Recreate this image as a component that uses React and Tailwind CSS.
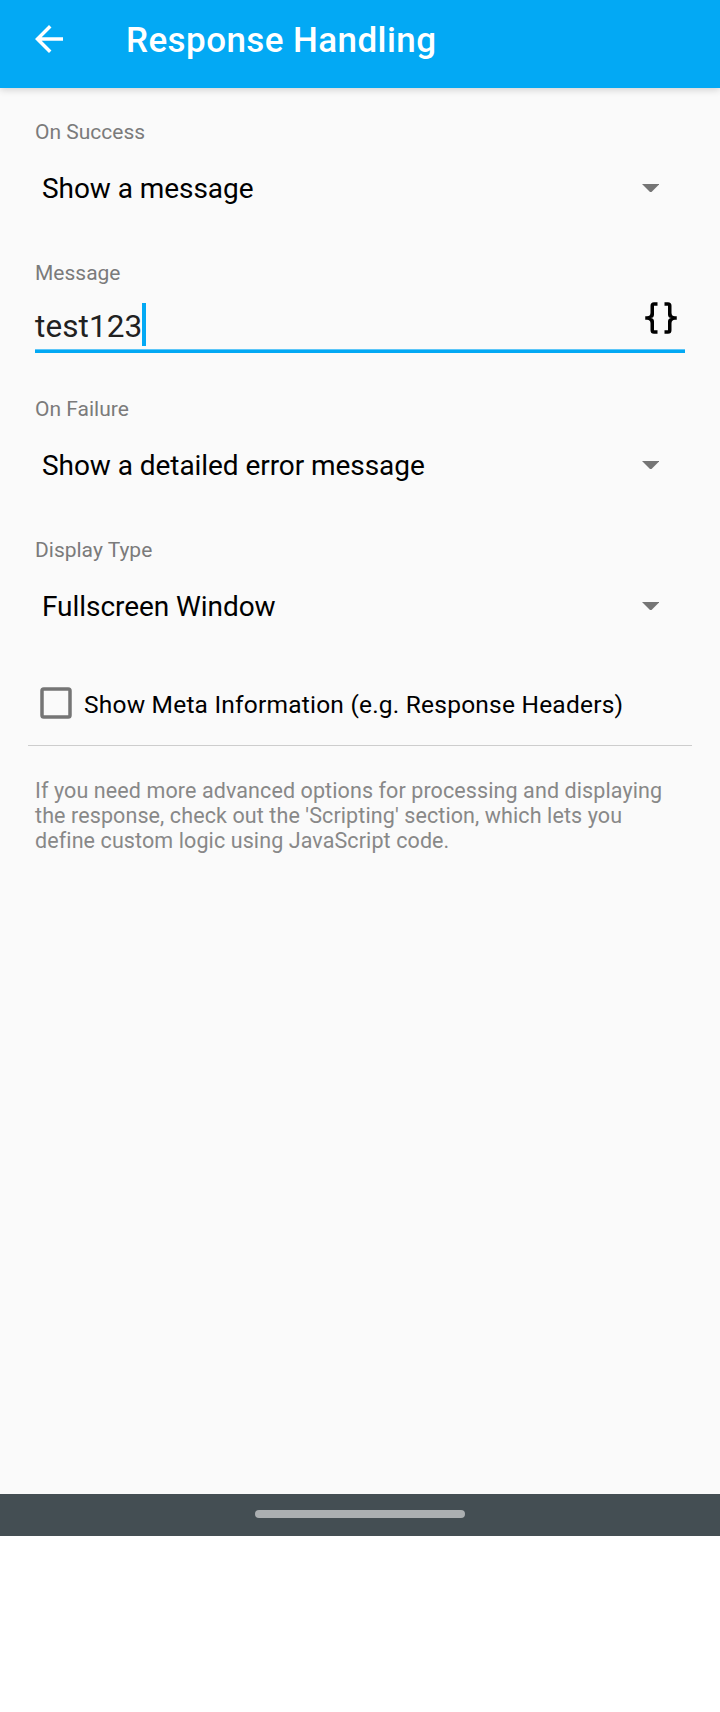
function Label({ children }) {
  return <div className="h-6 text-[21px] leading-6 text-[#7b7b7b] whitespace-nowrap">{children}</div>;
}

function SelectField({ label, value, className }) {
  return (
    <section className={className}>
      <Label>{label}</Label>
      <div className="mt-7 flex h-8 items-center justify-between pl-[7px] pr-[26px]">
        <span className="mt-0.5 text-[28px] leading-8 tracking-[-0.06px] text-black whitespace-nowrap">{value}</span>
        <svg className="h-[8.75px] w-[17.5px]" viewBox="0 0 10 5" fill="#757575">
          <path d="M0 0l5 5 5-5z" />
        </svg>
      </div>
    </section>
  );
}

export default function App() {
  return (
    <div className="flex h-[1712px] w-[720px] flex-col bg-white font-['Roboto',sans-serif]">
      <header className="relative flex h-[88px] shrink-0 items-center bg-[#03a9f4] pb-2 pl-7 shadow-[0_2px_7px_rgba(0,0,0,0.16)]">
        <svg className="-mt-0.5 h-[42px] w-[42px]" viewBox="0 0 24 24" fill="#fff">
          <path d="M20 11H7.83l5.59-5.59L12 4l-8 8 8 8 1.41-1.41L7.83 13H20v-2z" />
        </svg>
        <h1 className="mt-0.5 ml-14 text-[35px] leading-10 font-medium tracking-[0.42px] text-white whitespace-nowrap">Response Handling</h1>
      </header>

      <main className="flex h-[1406px] shrink-0 flex-col bg-[#fafafa] px-[35px] pt-8">
        <SelectField label="On Success" value="Show a message" />

        <section className="mt-[57px]">
          <Label>Message</Label>
          <div className="mt-3 flex h-[56px] justify-between border-b-[3px] border-[#03a9f4] pr-[3px] shadow-[inset_0_-1px_#5cc6f8]">
            <div className="flex pt-[6px]">
              <span className="mt-[6px] text-[31.5px] leading-9 tracking-[0.08px] text-[#212121]">test123</span>
              <span className="h-[43px] w-1 bg-[#03a9f4]" />
            </div>
            <svg className="h-[42px] w-[42px]" viewBox="0 0 24 24" fill="#000">
              <path d="M8,3A2,2 0 0,0 6,5V9A2,2 0 0,1 4,11H3V13H4A2,2 0 0,1 6,15V19A2,2 0 0,0 8,21H10V19H8V14A2,2 0 0,0 6,12A2,2 0 0,0 8,10V5H10V3M16,3A2,2 0 0,1 18,5V9A2,2 0 0,0 20,11H21V13H20A2,2 0 0,0 18,15V19A2,2 0 0,1 16,21H14V19H16V14A2,2 0 0,1 18,12A2,2 0 0,1 16,10V5H14V3H16Z" />
            </svg>
          </div>
        </section>

        <SelectField className="mt-11" label="On Failure" value="Show a detailed error message" />
        <SelectField className="mt-[57px]" label="Display Type" value="Fullscreen Window" />

        <label className="mt-[65px] ml-[5px] flex h-8 items-center gap-3">
          <svg className="h-8 w-8" viewBox="0 0 32 32" fill="none" stroke="#757575" strokeWidth="3.5">
            <rect x="2" y="2" width="28" height="28" rx="1.75" />
          </svg>
          <span className="mt-[3px] text-[24.5px] leading-7 tracking-[0.215px] text-black whitespace-nowrap">
            Show Meta Information (e.g. Response Headers)
          </span>
        </label>

        <div className="-mx-[7px] mt-[26px] h-px bg-[#cdcdcd]" />

        <p className="mt-8 text-[21.5px] leading-[25px] tracking-[0.1px] text-[#888888] whitespace-nowrap">
          If you need more advanced options for processing and displaying
          <br />
          the response, check out the 'Scripting' section, which lets you
          <br />
          define custom logic using JavaScript code.
        </p>
      </main>

      <footer className="flex h-[42px] shrink-0 justify-center bg-[#444e53] pt-4">
        <div className="h-2 w-[210px] rounded-full bg-[#abafb1]" />
      </footer>
    </div>
  );
}
